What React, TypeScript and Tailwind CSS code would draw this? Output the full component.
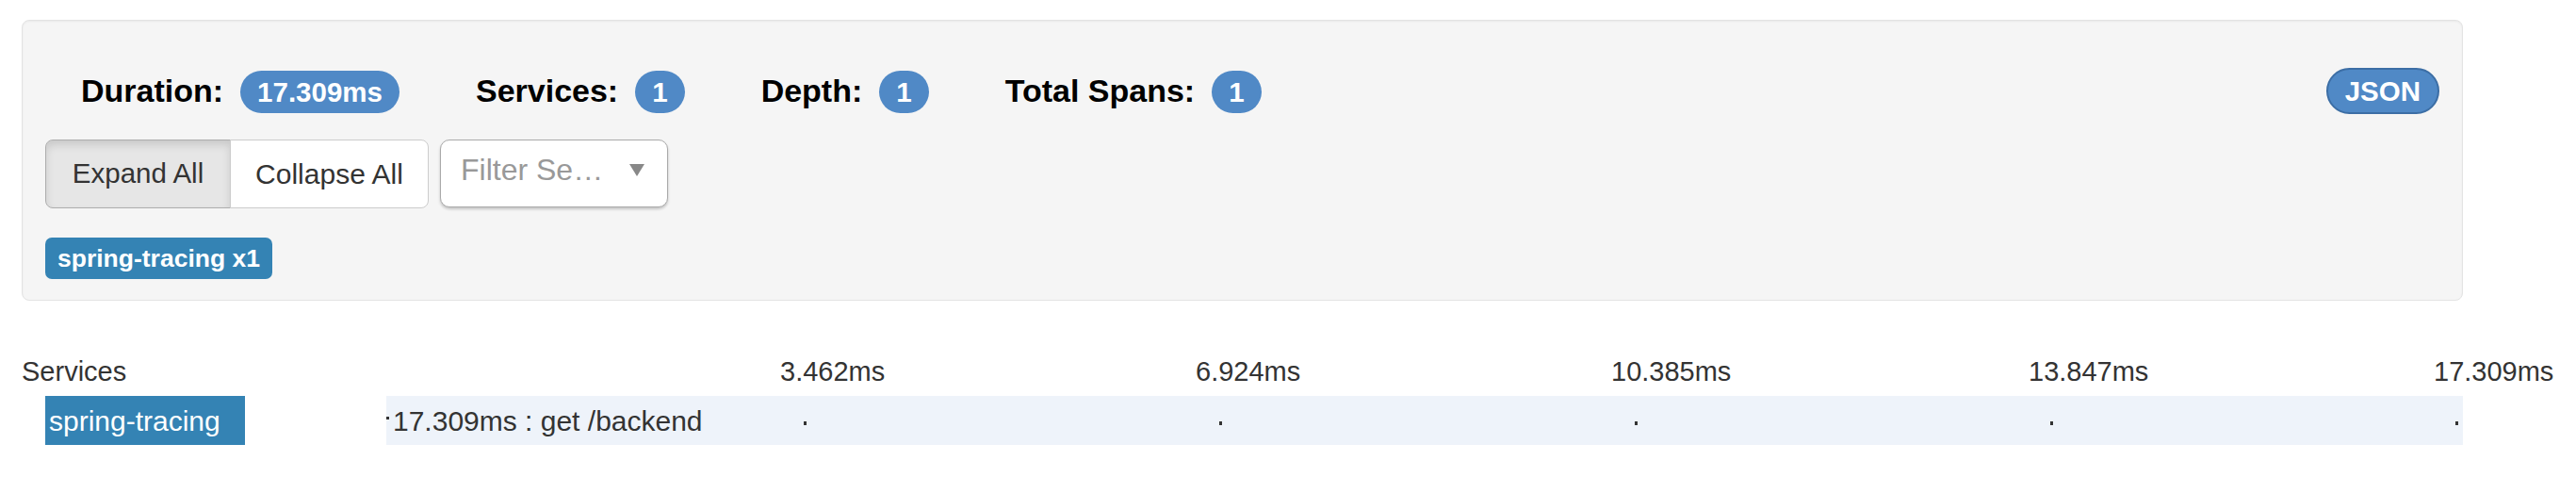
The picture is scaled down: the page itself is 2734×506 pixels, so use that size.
import React from 'react'

const stats = [
  { label: 'Duration:', value: '17.309ms' },
  { label: 'Services:', value: '1' },
  { label: 'Depth:', value: '1' },
  { label: 'Total Spans:', value: '1' },
]

// axis labels sit slightly left of their tick; positions in px from timeline start
const ticks = [
  { label: '3.462ms', left: 'left-[418px]' },
  { label: '6.924ms', left: 'left-[859px]' },
  { label: '10.385ms', left: 'left-[1300px]' },
  { label: '13.847ms', left: 'left-[1743px]' },
  { label: '17.309ms', left: 'left-[2173px]' },
]

const dots = ['left-[443px]', 'left-[884px]', 'left-[1325px]', 'left-[1766px]', 'left-[2196px]']

function Badge({ children }: { children: React.ReactNode }) {
  return (
    <span className="inline-flex h-[45px] items-center rounded-full bg-[#5089c6] px-[18px] text-[29.5px] font-bold leading-none text-white">
      {children}
    </span>
  )
}

function TraceSummary() {
  return (
    <div className="h-[298px] w-[2591px] rounded-[8px] border border-[#e3e3e3] bg-[#f5f5f5] px-[24px] pt-[50px] shadow-[inset_0_1px_2px_rgba(0,0,0,0.05)]">
      <div className="flex h-[49px] items-center justify-between">
        <div className="ml-[38px] flex items-center gap-[81px]">
          {stats.map((stat) => (
            <div key={stat.label} className="flex items-baseline gap-[18px]">
              <span className="text-[34px] font-bold text-black">{stat.label}</span>
              <Badge>{stat.value}</Badge>
            </div>
          ))}
        </div>
        <button
          type="button"
          className="inline-flex h-[49px] items-center rounded-full border-2 border-[#3c6ea5] bg-[#5089c6] px-[18px] text-[29.5px] font-bold leading-none text-white"
        >
          JSON
        </button>
      </div>

      <div className="mt-[27px] flex items-start">
        <div className="flex">
          <button
            type="button"
            className="h-[73px] w-[197px] rounded-l-[8px] border border-[#adadad] bg-[#e6e6e6] text-[29.5px] text-[#333] shadow-[inset_0_5px_8px_rgba(0,0,0,0.125)]"
          >
            Expand All
          </button>
          <button
            type="button"
            className="-ml-px h-[73px] w-[211px] rounded-r-[8px] border border-[#ccc] bg-white text-[30px] text-[#333]"
          >
            Collapse All
          </button>
        </div>
        <div className="ml-[12px] flex h-[72px] w-[242px] items-start rounded-[10px] border border-[#aaa] bg-white pl-[21px] pr-[24px] pt-[11px] shadow-[0_2px_3px_rgba(0,0,0,0.2)]">
          <span className="text-[32px] leading-[40px] text-[#999]">Filter Se…</span>
          <span className="ml-auto flex h-[40px] items-center">
            <svg width="16" height="13" viewBox="0 0 16 13">
              <path d="M0 0 H16 L8 13 Z" fill="#888" />
            </svg>
          </span>
        </div>
      </div>

      <div className="mt-[31px]">
        <span className="inline-flex h-[44px] items-center rounded-[7px] bg-[#3483b4] px-[13px] text-[26.5px] font-bold leading-none text-white">
          spring-tracing x1
        </span>
      </div>
    </div>
  )
}

function Timeline() {
  return (
    <div className="mt-[55px] w-[2591px] text-[#333]">
      <div className="flex h-[41px] text-[29px] leading-[41px]">
        <div className="w-[387px] shrink-0">Services</div>
        <div className="relative flex-1">
          {ticks.map((tick) => (
            <span key={tick.label} className={`absolute top-0 whitespace-nowrap ${tick.left}`}>
              {tick.label}
            </span>
          ))}
        </div>
      </div>

      <div className="mt-[5px] flex h-[52px]">
        <div className="w-[387px] shrink-0 pl-[25px]">
          <div className="flex h-[52px] w-[212px] items-center bg-[#3483b4] pl-[4px] text-[30px] text-white">
            spring-tracing
          </div>
        </div>
        <div className="relative flex h-[52px] flex-1 items-center bg-[#eef3fa] pl-[7px] text-[30px]">
          <span className="absolute left-0 top-[22px] h-[3px] w-[3px] bg-[#333]" />
          {dots.map((left) => (
            <span key={left} className={`absolute top-[27px] h-[4px] w-[3px] bg-[#333] ${left}`} />
          ))}
          <span>17.309ms : get /backend</span>
        </div>
      </div>
    </div>
  )
}

export default function App() {
  return (
    <div className="min-h-[506px] bg-white pl-[23px] pt-[21px] font-['Liberation_Sans',Arial,sans-serif]">
      <TraceSummary />
      <Timeline />
    </div>
  )
}
